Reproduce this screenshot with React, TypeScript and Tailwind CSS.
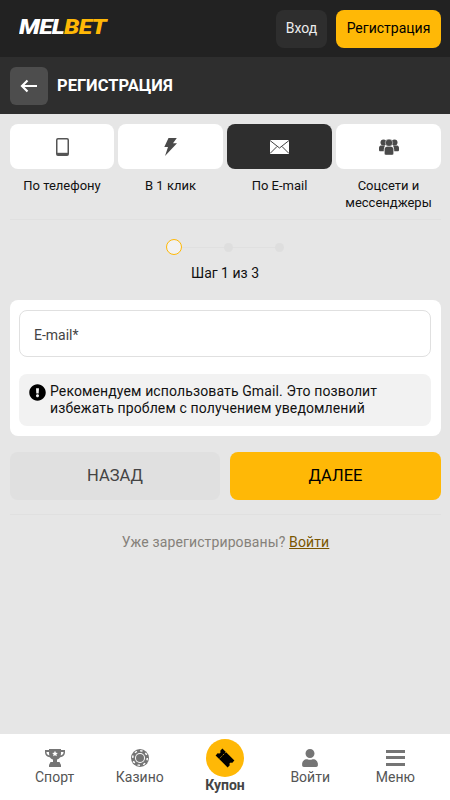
import { FaExclamationCircle, FaUser } from 'react-icons/fa';

const PhoneIcon = () => (
  <svg width="13" height="18" viewBox="0 0 13 18" fill="none">
    <rect x="0.750" y="0.750" width="11.500" height="16.500" rx="1.200" stroke="#555" strokeWidth="1.500" />
    <rect x="1" y="14.800" width="11" height="2.200" fill="#555" />
  </svg>
);

const BoltIcon = () => (
  <svg width="13" height="18" viewBox="0 0 13 18">
    <path d="M4.500 0h8.300L9 5.200h4L1 18l3-9H0.300L4.500 0Z" fill="#4a4a4a" />
  </svg>
);

const MailIcon = () => (
  <svg width="19" height="14" viewBox="0 0 19 14">
    <rect width="19" height="14" fill="#fff" />
    <path d="M0 .5 9.500 8 19 .5M0 13.500 7 6.500M19 13.500 12 6.500" fill="none" stroke="#2e2e2e" strokeWidth="0.900" />
  </svg>
);

const GroupIcon = () => (
  <svg width="20" height="16" viewBox="0 0 20 16" fill="#4a4a4a">
    <circle cx="4.500" cy="3.400" r="3" />
    <circle cx="15.500" cy="3.400" r="3" />
    <path d="M0 8.800C0 7 1.400 6.400 2.600 6.400h3.600c-.9 1.200-1.400 2.900-1.400 4.900v1H1.300C.5 12.300 0 11.800 0 11V8.800ZM20 8.800c0-1.800-1.400-2.400-2.600-2.400h-3.600c.9 1.200 1.400 2.900 1.400 4.900v1h3.500c.8 0 1.300-.5 1.300-1.300V8.800Z" />
    <circle cx="10" cy="3.800" r="3.700" stroke="#fff" strokeWidth="0.500" />
    <path d="M5.400 10.300c0-2 1.300-2.900 2.800-2.900h3.600c1.500 0 2.800.9 2.800 2.900v3.900c0 1-.7 1.800-1.700 1.800H7.100c-1 0-1.700-.8-1.700-1.800v-3.900Z" stroke="#fff" strokeWidth="0.400" />
  </svg>
);

const TrophyIcon = () => (
  <svg width="20" height="19" viewBox="0 0 20 19">
    <path d="M4 1h12v1h4v2.500c0 2.500-2 4.300-4.800 4.700-.8 1.200-2 2-3.200 2.300V14h2.500l1.500 3v2H4v-2l1.500-3H8v-2.500C6.800 11.200 5.600 10.400 4.800 9.200 2 8.800 0 7 0 4.500V2h4V1Zm-2.500 3v.5c0 1.300 1 2.400 2.800 3C4 6.400 4 5.200 4 4H1.500Zm17 0H16c0 1.200 0 2.400-.3 3.500 1.800-.6 2.800-1.700 2.800-3V4Z" fill="#757575" />
    <path d="m10 2.800.9 1.900 2 .2-1.500 1.400.4 2L10 7.300l-1.800 1 .4-2L7.100 4.900l2-.2.9-1.900Z" fill="#fff" />
  </svg>
);

const ChipIcon = () => (
  <svg width="18" height="18" viewBox="0 0 18 18">
    <circle cx="9" cy="9" r="9" fill="#757575" />
    <circle cx="9" cy="9" r="7.300" fill="none" stroke="#fff" strokeWidth="1.500" strokeDasharray="2.400 3.330" />
    <circle cx="9" cy="9" r="5" fill="#fff" />
    <circle cx="9" cy="9" r="4" fill="#757575" />
  </svg>
);

const TicketIcon = () => (
  <svg width="20" height="20" viewBox="0 0 20 20">
    <g transform="rotate(45 10 10)">
      <path d="M1.500 5.200h17v3.300a1.500 1.500 0 0 0 0 3v3.300h-17v-3.300a1.500 1.500 0 0 0 0-3V5.200Z" fill="#000" />
      <path d="M6.500 5.500v9" stroke="#ffb806" strokeWidth="0.800" strokeDasharray="1.200 1.200" />
    </g>
  </svg>
);

const MenuIcon = () => (
  <div className="flex h-[16px] w-[19px] flex-col justify-between">
    <div className="h-[3px] bg-[#757575]" />
    <div className="h-[3px] bg-[#757575]" />
    <div className="h-[3px] bg-[#757575]" />
  </div>
);

const tabs = [
  { label: 'По телефону', icon: <PhoneIcon />, width: 'w-[104px]' },
  { label: 'В 1 клик', icon: <BoltIcon />, width: 'w-[105px]' },
  { label: 'По E-mail', icon: <MailIcon />, width: 'w-[105px]', active: true },
  { label: 'Соцсети и мессенджеры', icon: <GroupIcon />, width: 'w-[105px]' },
];

const navItems = [
  { label: 'Спорт', icon: <TrophyIcon /> },
  { label: 'Казино', icon: <ChipIcon /> },
  { label: 'Купон', coupon: true },
  { label: 'Войти', icon: <FaUser className="text-[#757575] text-[18px]" /> },
  { label: 'Меню', icon: <MenuIcon /> },
];

export default function App() {
  return (
    <div className="flex h-[800px] w-[450px] flex-col overflow-hidden bg-[#e6e6e6] font-['Roboto',sans-serif] text-black">
      <header className="flex h-[57px] shrink-0 items-center justify-between bg-[#222222] pl-[19px] pr-[9px]">
        <div className="-mt-[2px] origin-left scale-x-[1.17] text-[21px] font-black italic leading-none tracking-[-0.6px]">
          <span className="text-white">MEL</span>
          <span className="text-[#ffb806]">BET</span>
        </div>
        <div className="flex gap-[9px]">
          <button className="h-[38px] w-[51px] rounded-[8px] bg-[#2e2e2e] text-[14px] text-[#ececec]">Вход</button>
          <button className="h-[38px] w-[105px] rounded-[8px] bg-[#ffb806] text-[14px] text-black">Регистрация</button>
        </div>
      </header>

      <div className="flex h-[57px] shrink-0 items-center gap-[9px] bg-[#2e2e2e] pl-[10px]">
        <button className="flex h-[38px] w-[38px] items-center justify-center rounded-[6px] bg-[#4d4d4d]">
          <svg width="18" height="14" viewBox="0 0 18 14" fill="none">
            <path d="M17 7H2M7.500 1.500 2 7l5.500 5.500" stroke="#fff" strokeWidth="2.200" />
          </svg>
        </button>
        <h1 className="pt-px text-[16.500px] font-bold uppercase text-white">Регистрация</h1>
      </div>

      <main className="flex min-h-0 flex-1 flex-col pl-[10px] pr-[9px] pt-[10px]">
        <div className="flex h-[96px] shrink-0 justify-between border-b border-[#e0e0e0]">
          {tabs.map((tab) => (
            <div key={tab.label} className={`flex flex-col items-center ${tab.width}`}>
              <div
                className={`flex h-[45px] w-full items-center justify-center rounded-[8px] ${
                  tab.active ? 'bg-[#2e2e2e]' : 'bg-white'
                }`}
              >
                {tab.icon}
              </div>
              <span className="mt-[8px] text-center text-[13px] leading-[17px] text-[#111111]">{tab.label}</span>
            </div>
          ))}
        </div>

        <div className="flex shrink-0 flex-col items-center pr-[1px] pt-[19px]">
          <div className="flex items-center">
            <div className="h-[16px] w-[16px] rounded-full border border-[#ffb806] bg-[#f2f2f2]" />
            <div className="h-px w-[42px] bg-[#e0e0e0]" />
            <div className="h-[9px] w-[9px] rounded-full bg-[#dedede]" />
            <div className="h-px w-[42px] bg-[#e0e0e0]" />
            <div className="h-[9px] w-[9px] rounded-full bg-[#dedede]" />
          </div>
          <div className="mt-[9px] text-[14px] leading-[18px] text-[#111111]">Шаг 1 из 3</div>
        </div>

        <section className="mt-[18px] shrink-0 rounded-[8px] bg-white pb-[10px] pl-[9px] pr-[10px] pt-[10px]">
          <div className="flex h-[47px] items-center rounded-[8px] border border-[#e0e0e0] pl-[14px] pt-[3px] text-[14px] text-[#444444]">
            E-mail*
          </div>
          <div className="mt-[17px] flex h-[52px] gap-[4px] rounded-[8px] bg-[#f2f2f2] pl-[10px] pr-[4px] pt-[9px] text-[14px] leading-[17px] tracking-[0.12px] text-[#111111]">
            <FaExclamationCircle className="mt-px shrink-0 text-[17px] text-black" />
            <p>Рекомендуем использовать Gmail. Это позволит избежать проблем с получением уведомлений</p>
          </div>
        </section>

        <div className="mt-[16px] flex shrink-0 gap-[10px]">
          <button className="h-[48px] w-[210px] rounded-[8px] bg-[#e0e0e0] pt-px text-[16.500px] uppercase text-[#444444]">Назад</button>
          <button className="h-[48px] w-[211px] rounded-[8px] bg-[#ffb806] pt-px text-[16.500px] uppercase text-black">Далее</button>
        </div>

        <div className="mt-[14px] shrink-0 border-t border-[#e0e0e0] pt-[18px] text-center text-[14px] leading-[18px] tracking-[0.12px] text-[#85817a]">
          Уже зарегистрированы? <a className="text-[#7a5600] underline">Войти</a>
        </div>
      </main>

      <nav className="grid h-[66px] shrink-0 grid-cols-5 bg-white px-[12px]">
        {navItems.map((item) =>
          item.coupon ? (
            <div key={item.label} className="flex flex-col items-center pt-[5px]">
              <div className="flex h-[38px] w-[38px] items-center justify-center rounded-full bg-[#ffb806]">
                <TicketIcon />
              </div>
              <span className="text-[14px] font-bold leading-[17px] text-[#444444]">{item.label}</span>
            </div>
          ) : (
            <div key={item.label} className="flex flex-col items-center pt-[14px]">
              <div className="flex h-[19px] items-center justify-center">{item.icon}</div>
              <span className="mt-[2px] text-[14px] leading-[17px] text-[#555555]">{item.label}</span>
            </div>
          ),
        )}
      </nav>
    </div>
  );
}
